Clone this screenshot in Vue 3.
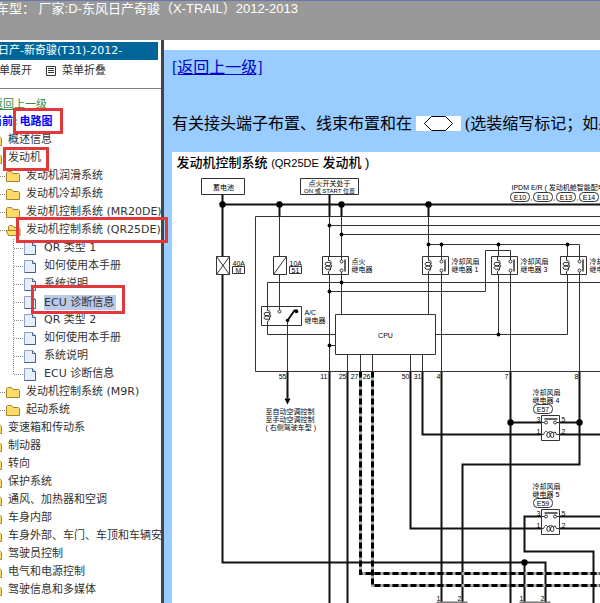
<template>
  <div class="page">
    <header class="top-bar">车型： 厂家:D-东风日产奇骏（X-TRAIL）2012-2013</header>

    <div class="content">
      <aside class="sidebar">
        <h1 class="car-name">东风日产-新奇骏(T31)-2012-</h1>
        <div class="tools">
          <button type="button">菜单展开</button>
          <button type="button">
            <svg width="10" height="10" viewBox="0 0 10 10">
              <path d="M.5 .5h9v9h-9zM2 2.5h6M2 4.5h6M2 6.5h6" />
            </svg>
            菜单折叠
          </button>
        </div>

        <nav class="tree">
          <a class="back" href="#">返回上一级</a>
          <p class="current">当前:<span>电路图</span></p>
          <ul>
            <li v-for="group in tree" :key="group.name">
              <a href="#" class="row">
                <svg class="icon" viewBox="0 0 16 16">
                  <path class="folder" d="M1.5 13.5v-9l1-1h4l1.500 2h5.500l1 1v7z" />
                </svg>
                <span>{{ group.name }}</span>
              </a>
              <ul v-if="group.children">
                <li v-for="item in group.children" :key="item.name">
                  <a href="#" class="row line">
                    <svg class="icon" viewBox="0 0 16 16">
                      <template v-if="item.children">
                        <path class="folder" d="M3.500 13.500v-9l1-1h3l1.500 2h5l1 1v7z" />
                        <path class="folder" d="M1 8.500h11.500l2 5H3.500z" />
                      </template>
                      <path v-else class="folder" d="M1.500 13.500v-9l1-1h4l1.500 2h5.500l1 1v7z" />
                    </svg>
                    <span>{{ item.name }}</span>
                  </a>
                  <ul v-if="item.children" class="docs">
                    <li v-for="doc, index in item.children" :key="index">
                      <a href="#" class="row line">
                        <svg class="icon" viewBox="0 0 16 16">
                          <path class="doc" d="M1.500 2.500h8l3 3v9h-11z" />
                          <path class="doc-edge" d="M9.500 2.500v3h3v9h-11" />
                        </svg>
                        <span :class="{ selected: index === selected }">{{ doc }}</span>
                      </a>
                    </li>
                  </ul>
                </li>
              </ul>
            </li>
          </ul>
        </nav>
      </aside>

      <main class="main">
        <div class="article">
          <a href="#" class="up">[返回上一级]</a>
          <p class="note">
            有关接头端子布置、线束布置和在
            <svg class="hexagon" width="45" height="15" viewBox="0 0 45 15">
              <path d="M8.500 7.500l7-7h14l7 7-7 7h-14z" />
            </svg>
            (选装缩写标记；如果有关的说明
          </p>

          <svg class="diagram" width="760" height="600" viewBox="171.5 151.5 760 600">
            <text class="title" x="176" y="166">发动机控制系统 <tspan class="latin">(QR25DE</tspan> 发动机 )</text>

            <!-- 細線 -->
            <path class="thin" d="
              M201 178h43v16h-43z M300 178h58v16h-58z
              M931 216H255V371H931
              M279 216V309 M329 216V371 M341 216V314
              M329 225H931 M341 234H931
              M428 216V314 M428 244H579V371 M441 244V371 M498 244V334 M567 244V334H435
              M329 291H485V250H510V371
              M931 282H267V334H335 M329 345H335
              M287 321V371
              M347 354V371 M360 354V371 M372 354V371 M410 354V371 M422 354V371" />

            <!-- 粗線 -->
            <path class="thick" d="
              M222 204H931 M222 194V562H545V610 M279 204V216 M329 194V216 M341 204V216 M428 204V216
              M287 371V398 M329 371V610 M347 371V610
              M410 371V528H931 M422 371V434H931
              M441 371V602 M510 371V610
              M579 371V464H462V602
              M510 422H579 M931 516H524V551H593V610 M524 562V610" />

            <path class="shield" d="M360 371V573H931 M372 371V585H931" />
            <path class="dash" d="M360 371V573H931 M372 371V585H931" />

            <path d="M284 398h6l-3 6z" />
            <path class="gray" d="M436 602h31 M519 602h31" />

            <circle v-for="[x, y] in bigDots" :key="x + '-' + y" :cx="x" :cy="y" r="3.200" />
            <circle v-for="[x, y] in dots" :key="x + '-' + y" :cx="x" :cy="y" r="1.900" />

            <!-- 保險絲 -->
            <g class="part">
              <path class="blank" d="M216 256h13v18h-13z M273 256h13v18h-13z" />
              <path d="M216 256l13 18 M229 256l-13 18 M286 256l-13 18" />
              <path d="M232 266h12v7h-12z M289 266h12v7h-12z" />
            </g>
            <text x="232" y="265">40A</text>
            <text x="289" y="265">10A</text>
            <text x="238" y="272" class="mid">M</text>
            <text x="295" y="272" class="mid">51</text>

            <!-- IPDM 內繼電器 -->
            <g v-for="relay in relays" :key="relay.x" :transform="`translate(${relay.x} 256)`">
              <g class="part">
                <path class="blank" d="M0 0h26v18H0z" />
                <path d="M6 0v4q4 0 2 4q3 1 0 3q1 3-2 4v3" />
                <ellipse cx="5.500" cy="7.500" rx="3" ry="1.700" />
                <ellipse cx="5.500" cy="11.200" rx="3" ry="1.700" />
                <path d="M19 0v3.500M19 15.500v2.500" />
                <path class="bar" d="M22.500 3v12" />
                <circle cx="19" cy="5" r="1.500" />
                <circle cx="19" cy="14" r="1.500" />
              </g>
              <text x="29" y="7">{{ relay.label[0] }}</text>
              <text x="29" y="15">{{ relay.label[1] }}</text>
            </g>

            <!-- A/C 繼電器 -->
            <g class="part">
              <path class="blank" d="M261 306h40v19h-40z" />
              <path d="M267 306v4q4 0 2 4q3 1 0 3q1 3-2 4v4 M279 306v3.500 M287 320v5" />
              <ellipse cx="266.500" cy="313.500" rx="3" ry="1.700" />
              <ellipse cx="266.500" cy="317.200" rx="3" ry="1.700" />
              <circle cx="279" cy="311" r="1.500" />
            </g>
            <path class="thick" d="M287 320l7-10h3" />
            <circle cx="287" cy="320" r="1.800" />
            <circle cx="296" cy="311" r="1.800" />
            <text x="304" y="314">A/C</text>
            <text x="304" y="322">继电器</text>

            <path class="part blank" d="M335 314h100v40H335z" />
            <text x="385" y="337" class="mid">CPU</text>

            <text x="223" y="189" class="mid">蓄电池</text>
            <text x="329" y="185" class="mid">点火开关处于</text>
            <text x="329" y="192" class="mid small">ON 或 START 位置</text>
            <text x="511" y="189">IPDM E/R ( 发动机舱智能配电模块 )</text>
            <g v-for="name, index in connectors" :key="name">
              <rect class="part" :x="510 + index * 23" y="192" width="19" height="9" rx="4" />
              <text :x="519.500 + index * 23" y="199" class="mid">{{ name }}</text>
              <text :x="530 + index * 23" y="199">,</text>
            </g>

            <text v-for="[x, pin] in pins" :key="pin" :x="x" y="378" class="end">{{ pin }}</text>

            <text x="265" y="413">至自动空调控制</text>
            <text x="265" y="421">至手动空调控制</text>
            <text x="265" y="429">( 右侧驾驶车型 )</text>

            <!-- 冷卻風扇繼電器 4 / 5 -->
            <g v-for="fan in fans" :key="fan.name" :transform="`translate(533 ${fan.y})`">
              <text x="-1" y="3">冷却风扇</text>
              <text x="-1" y="11">{{ fan.name }}</text>
              <g class="part">
                <rect x="0" y="13" width="19" height="9" rx="4" />
                <path class="blank" d="M8 24h18v25H8z" />
                <path d="M8 31h3M23 31h3M8 43h2q2-5 4-2q3-2 6 0q2-2 3 2h3" />
                <ellipse cx="15" cy="43.500" rx="1.700" ry="2.500" />
                <ellipse cx="18.700" cy="43.500" rx="1.700" ry="2.500" />
                <path class="bar" d="M11 27.500h13" />
                <circle cx="12.500" cy="31" r="1.500" />
                <circle cx="21.500" cy="31" r="1.500" />
              </g>
              <text x="9.500" y="20" class="mid">{{ fan.connector }}</text>
              <text x="3" y="30">3</text>
              <text x="28" y="30">5</text>
              <text x="3" y="42">1</text>
              <text x="28" y="42">2</text>
            </g>

            <text x="436" y="600">1</text>
            <text x="457" y="600">2</text>
            <text x="519" y="600">1</text>
            <text x="540" y="600">2</text>
          </svg>
        </div>
      </main>
    </div>

    <i class="mark mark-current"></i>
    <i class="mark mark-engine"></i>
    <i class="mark mark-system"></i>
    <i class="mark mark-doc"></i>
  </div>
</template>

<script setup>
import { ref } from 'vue'

const selected = ref(3)

const tree = [
  { name: '概述信息' },
  {
    name: '发动机',
    children: [
      { name: '发动机润滑系统' },
      { name: '发动机冷却系统' },
      { name: '发动机控制系统 (MR20DE)' },
      {
        name: '发动机控制系统 (QR25DE)',
        children: [
          'QR 类型 1',
          '如何使用本手册',
          '系统说明',
          'ECU 诊断信息',
          'QR 类型 2',
          '如何使用本手册',
          '系统说明',
          'ECU 诊断信息',
        ],
      },
      { name: '发动机控制系统 (M9R)' },
      { name: '起动系统' },
    ],
  },
  { name: '变速箱和传动系' },
  { name: '制动器' },
  { name: '转向' },
  { name: '保护系统' },
  { name: '通风、加热器和空调' },
  { name: '车身内部' },
  { name: '车身外部、车门、车顶和车辆安全' },
  { name: '驾驶员控制' },
  { name: '电气和电源控制' },
  { name: '驾驶信息和多媒体' },
]

const bigDots = [[222, 204], [279, 204], [341, 204], [428, 204], [510, 422], [579, 422], [524, 562]]
const dots = [
  [329, 225], [341, 234], [341, 282], [329, 291], [329, 345],
  [428, 244], [441, 244], [498, 244], [567, 244], [498, 334],
]
const relays = [
  { x: 322, label: ['点火', '继电器'] },
  { x: 422, label: ['冷却风扇', '继电器 1'] },
  { x: 491, label: ['冷却风扇', '继电器 3'] },
  { x: 560, label: ['冷却风扇', '继电器 2'] },
]
const connectors = ['E10', 'E11', 'E13', 'E14', 'E15']
const pins = [
  [286, 55], [327, 11], [346, 25], [358, 27], [370, 26],
  [409, 50], [421, 31], [440, 4], [508, 7], [578, 8],
]
const fans = [
  { name: '继电器 4', connector: 'E57', y: 391 },
  { name: '继电器 5', connector: 'E59', y: 485 },
]
</script>

<style>
body {
  margin: 0;
  background: #fff;
}
</style>

<style scoped>
.page {
  position: relative;
  display: flex;
  flex-direction: column;
  height: 100vh;
  overflow: hidden;
}

.top-bar {
  box-sizing: border-box;
  flex: none;
  height: 40px;
  padding-top: 1px;
  border-top: 1px solid #6b78a8;
  background: #999;
  color: #fff;
  font: 13px/14px "Liberation Sans", "Noto Sans CJK SC", sans-serif;
  white-space: nowrap;
  text-indent: -4px;
}

.content {
  display: flex;
  flex: 1;
  min-height: 0;
}

.sidebar {
  flex: none;
  width: 161px;
  overflow: hidden;
  border-right: 3px solid #444;
  font: 11px/18px "DejaVu Sans", "Noto Sans CJK SC", sans-serif;
  color: #333;
  white-space: nowrap;
}

.car-name {
  margin: 2px 3px 0 0;
  background: #069;
  color: #fff;
  font-size: 11px;
  font-weight: normal;
  line-height: 18px;
  text-indent: -24px;
}

.tools {
  display: flex;
  gap: 14px;
  height: 28px;
  margin-left: -12px;
  border-bottom: 1px solid #808080;
}

.tools button {
  display: flex;
  align-items: center;
  gap: 6px;
  height: 22px;
  padding: 0;
  border: 0;
  background: none;
  color: inherit;
  font: inherit;
  cursor: pointer;
}

.tools svg {
  fill: none;
  stroke: #333;
}

.tree {
  margin: 7px 0 0 -30px;
}

.tree a {
  color: inherit;
  text-decoration: none;
}

.tree .back {
  display: block;
  margin-left: 22px;
  line-height: 17px;
  color: #3a8a3a;
  text-decoration: underline;
}

.current {
  margin: 0 0 0 21px;
  color: #00f;
  font-weight: bold;
}

.current span {
  margin-left: 2px;
}

.tree ul {
  margin: 0;
  padding: 0;
  list-style: none;
}

.tree ul ul {
  padding-left: 18px;
}

.row {
  display: flex;
  align-items: center;
  height: 18px;
  padding-left: 17px;
}

.row.line {
  background: repeating-linear-gradient(90deg, #888 0 1px, transparent 1px 2px) 8px 9px / 10px 1px no-repeat;
}

.docs {
  background: repeating-linear-gradient(#888 0 1px, transparent 1px 2px) 25px 0 / 1px calc(100% - 9px) no-repeat;
}

.icon {
  flex: none;
  width: 16px;
  height: 16px;
  margin-right: 5px;
}

.folder {
  fill: #fbdc6a;
  stroke: #a8842a;
}

.doc {
  fill: #e6effc;
  stroke: #8ba3cc;
}

.doc-edge {
  fill: none;
  stroke: #4a618f;
}

.selected {
  height: 15px;
  padding-right: 2px;
  background: #b9cbe6;
  line-height: 15px;
}

.main {
  flex: 1;
  min-width: 0;
  overflow: hidden;
  padding-top: 10px;
}

.article {
  height: 100%;
  padding: 8px 0 0 8px;
  background: #9cf;
  color: #000;
  font: 16px/20px "Liberation Serif", "Noto Sans CJK SC", serif;
  white-space: nowrap;
}

.up {
  display: block;
  width: max-content;
  color: #00c;
}

.note {
  margin: 36px 0 18px;
}

.hexagon {
  background: #fff;
  fill: none;
  stroke: #000;
  vertical-align: -2px;
}

.diagram {
  display: block;
  background: #fff;
  font: 7px "Liberation Sans", "Noto Sans CJK SC", sans-serif;
}

.title {
  font-size: 13px;
  font-weight: 500;
}

.latin {
  font-size: 11px;
}

.small {
  font-size: 6px;
}

.mid {
  text-anchor: middle;
}

.end {
  text-anchor: end;
}

.thin,
.part {
  fill: none;
  stroke: #333;
}

.blank {
  fill: #fff;
}

.bar {
  stroke: #666;
  stroke-width: 2;
}

.thick {
  fill: none;
  stroke: #111;
  stroke-width: 2;
}

.gray {
  stroke: #777;
  stroke-width: 2;
}

.shield {
  fill: none;
  stroke: #aaa;
  stroke-width: 3;
}

.dash {
  fill: none;
  stroke: #000;
  stroke-width: 3;
  stroke-dasharray: 6 3;
}

.mark {
  position: absolute;
  box-sizing: border-box;
  border: 3px solid #e2383c;
  pointer-events: none;
}

.mark-current {
  left: 13px;
  top: 108px;
  width: 50px;
  height: 26px;
}

.mark-engine {
  left: 3px;
  top: 147px;
  width: 46px;
  height: 24px;
}

.mark-system {
  left: 16px;
  top: 217px;
  width: 152px;
  height: 26px;
}

.mark-doc {
  left: 31px;
  top: 285px;
  width: 94px;
  height: 29px;
}
</style>
